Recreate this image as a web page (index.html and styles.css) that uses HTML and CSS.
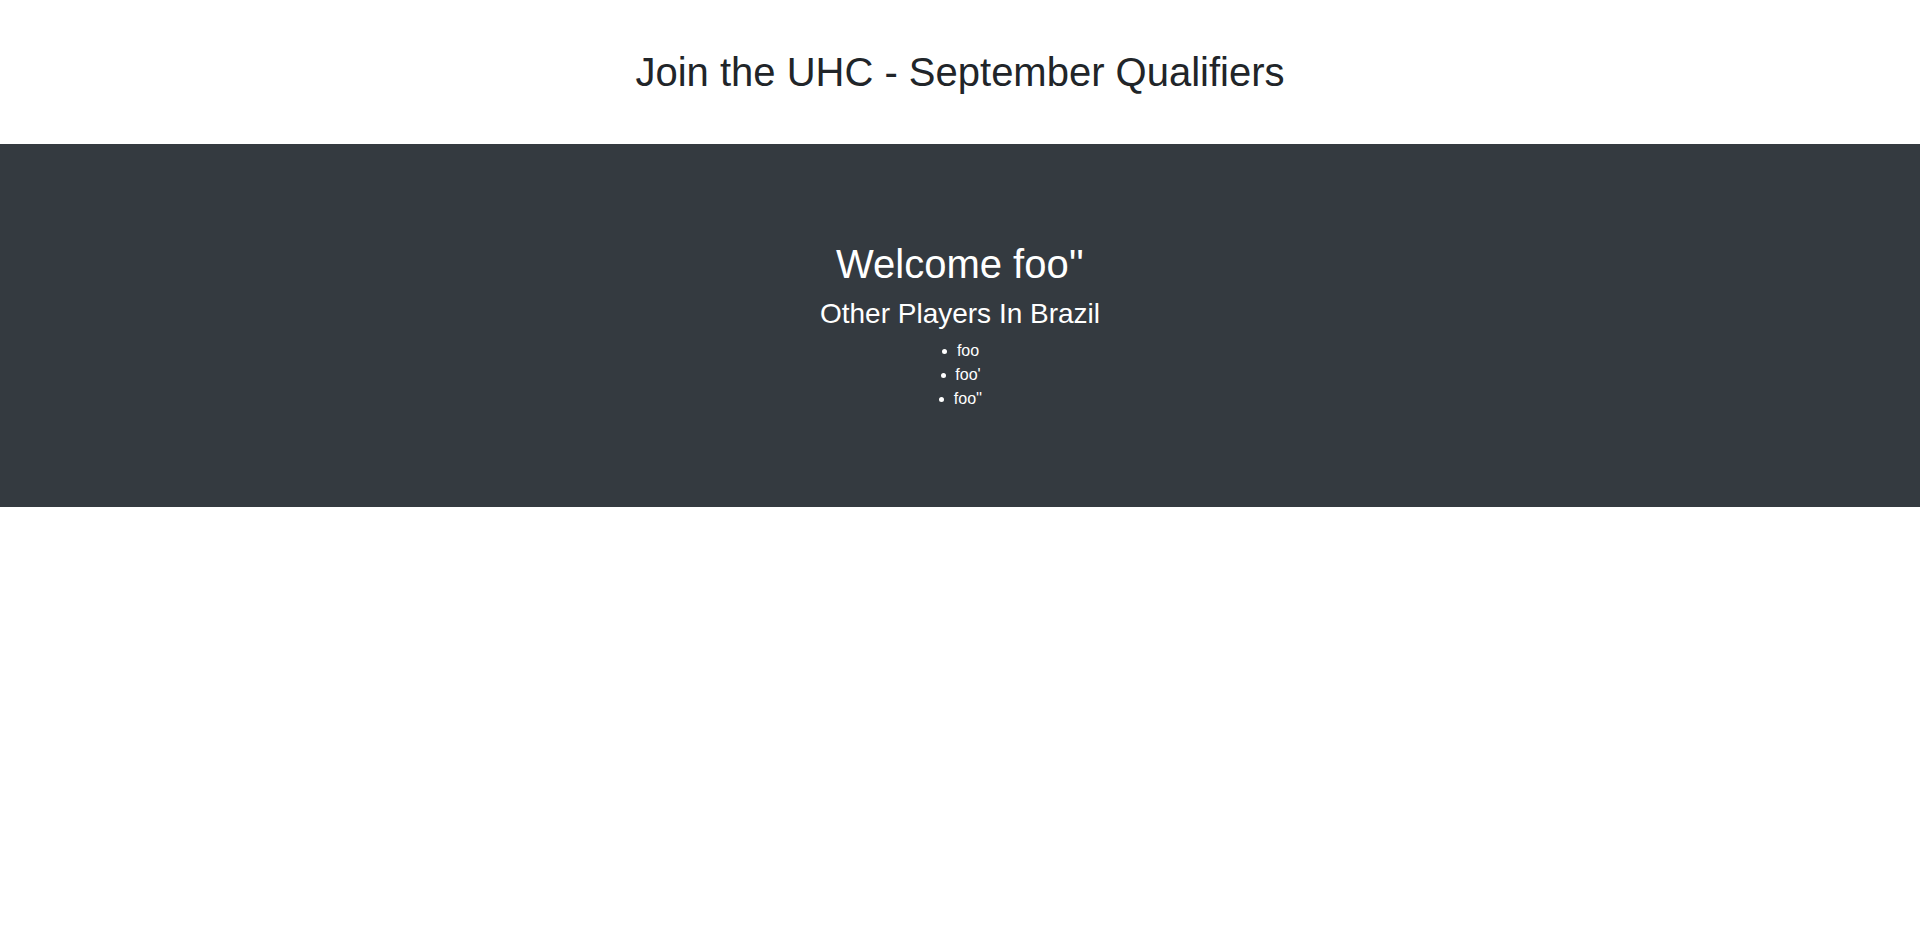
FILE: index.html
```html
<!DOCTYPE html>
<html lang="en">
<head>
<meta charset="utf-8">
<title>Join the UHC - September Qualifiers</title>
<link rel="stylesheet" href="styles.css">
</head>
<body>
<header class="page-header">
  <h1 class="page-title">Join the UHC - September Qualifiers</h1>
</header>
<section class="band">
  <h1 class="welcome">Welcome foo''</h1>
  <h3 class="subtitle">Other Players In Brazil</h3>
  <ul class="players">
    <li>foo</li>
    <li>foo'</li>
    <li>foo''</li>
  </ul>
</section>
</body>
</html>
```

FILE: styles.css
```css
* { box-sizing: border-box; }
html, body {
  margin: 0;
  padding: 0;
  background: #fff;
  font-family: "Liberation Sans", Arial, Helvetica, sans-serif;
  font-size: 16px;
  line-height: 1.5;
  color: #212529;
}
.page-header {
  padding: 48px 0;
  text-align: center;
}
.page-title {
  margin: 0;
  font-size: 40px;
  line-height: 1.2;
  font-weight: normal;
}
.band {
  background: #343a40;
  color: #fff;
  text-align: center;
  padding: 96px 0 80.5px;
}
.welcome {
  margin: 0 0 9px;
  font-size: 40px;
  line-height: 1.2;
  font-weight: normal;
}
.subtitle {
  margin: 0 0 8px;
  font-size: 28px;
  line-height: 1.2;
  font-weight: normal;
}
.players {
  list-style: none;
  margin: 0 0 16px;
  padding: 0 0 0 16px;
}
.players li::before {
  content: "";
  display: inline-block;
  width: 5px;
  height: 5px;
  border-radius: 50%;
  background: #fff;
  vertical-align: middle;
  margin: 0 9.5px 0 -14.5px;
}
```
